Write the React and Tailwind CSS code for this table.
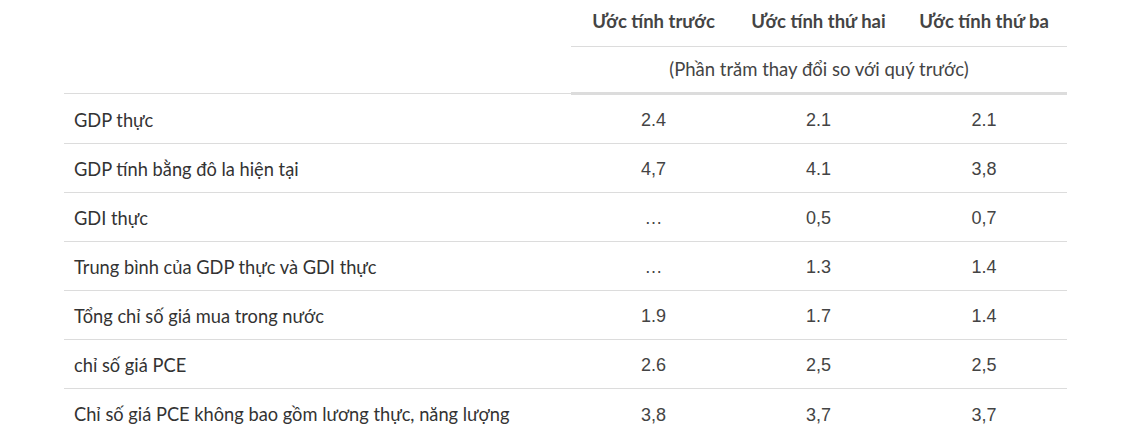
const ROWS = [
  ['GDP thực', '2.4', '2.1', '2.1'],
  ['GDP tính bằng đô la hiện tại', '4,7', '4.1', '3,8'],
  ['GDI thực', '...', '0,5', '0,7'],
  ['Trung bình của GDP thực và GDI thực', '...', '1.3', '1.4'],
  ['Tổng chỉ số giá mua trong nước', '1.9', '1.7', '1.4'],
  ['chỉ số giá PCE', '2.6', '2,5', '2,5'],
  ['Chỉ số giá PCE không bao gồm lương thực, năng lượng', '3,8', '3,7', '3,7'],
]

const lato = "font-['Lato','Noto_Sans',sans-serif]"
const arial = "font-['Liberation_Sans',Arial,sans-serif]"

export default function App() {
  return (
    <div className="w-[1130px] h-[437px] bg-white overflow-hidden text-[#333]">
      <div className="ml-[64px] w-[1003px] grid grid-cols-[507px_165px_165px_166px]">
        {/* header */}
        <div className="row-span-2 self-start h-[94px] border-b border-[#dcdcdc]" />
        {['Ước tính trước', 'Ước tính thứ hai', 'Ước tính thứ ba'].map((h) => (
          <div
            key={h}
            className={`${lato} h-[47px] flex items-center justify-center border-b border-[#dcdcdc] text-[18.5px] font-bold text-[#444] pb-[2px]`}
          >
            {h}
          </div>
        ))}
        <div
          className={`${lato} col-span-3 h-[48px] flex items-center justify-center border-b-[3px] border-[#dcdcdc] text-[18.5px] text-[#444]`}
        >
          (Phần trăm thay đổi so với quý trước)
        </div>

        {ROWS.map((r, i) => (
          <div key={i} className="contents">
            <div
              className={`${lato} h-[49px] flex items-center pl-[10px] pt-[3px] text-[18.25px] ${i < ROWS.length - 1 ? 'border-b border-[#dcdcdc]' : ''}`}
            >
              {r[0]}
            </div>
            {r.slice(1).map((v, j) => (
              <div
                key={j}
                className={`${arial} h-[49px] flex items-center justify-center pt-[3px] text-[18px] text-[#444] ${i < ROWS.length - 1 ? 'border-b border-[#dcdcdc]' : ''}`}
              >
                {v === '...' ? '…' : v}
              </div>
            ))}
          </div>
        ))}
      </div>
    </div>
  )
}
